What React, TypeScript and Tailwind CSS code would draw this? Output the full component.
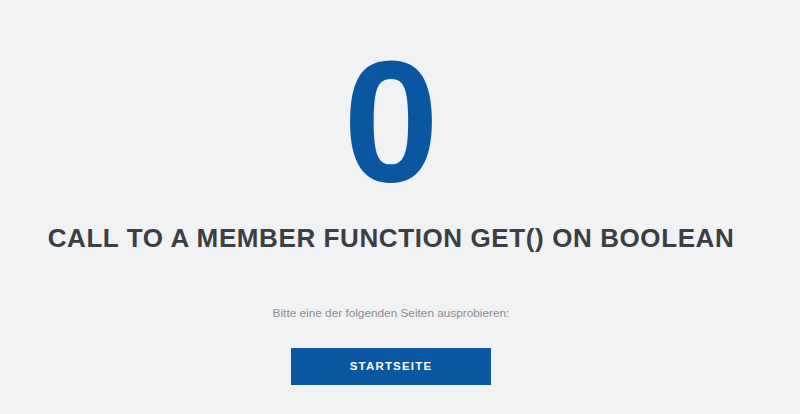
export default function App() {
  return (
    <div className="w-[800px] h-[414px] bg-[#f1f2f4] overflow-hidden" style={{ fontFamily: '"Liberation Sans", Arial, sans-serif' }}>
      <div className="w-[782px] flex flex-col items-center">
        <div className="mt-[35px] text-[172px] leading-[172px] font-bold text-[#0a56a0]">0</div>
        <h1 className="mt-[16px] text-[26px] leading-[30px] font-bold uppercase tracking-[0.6px] text-[#3b3f44]">Call to a member function get() on boolean</h1>
        <p className="mt-[53px] text-[11.8px] leading-[14px] text-[#8a8d91]">Bitte eine der folgenden Seiten ausprobieren:</p>
        <a className="mt-[28px] w-[200px] h-[37px] bg-[#0a56a0] flex items-center justify-center text-white text-[11.5px] font-bold tracking-[1.2px]">STARTSEITE</a>
      </div>
    </div>
  );
}
